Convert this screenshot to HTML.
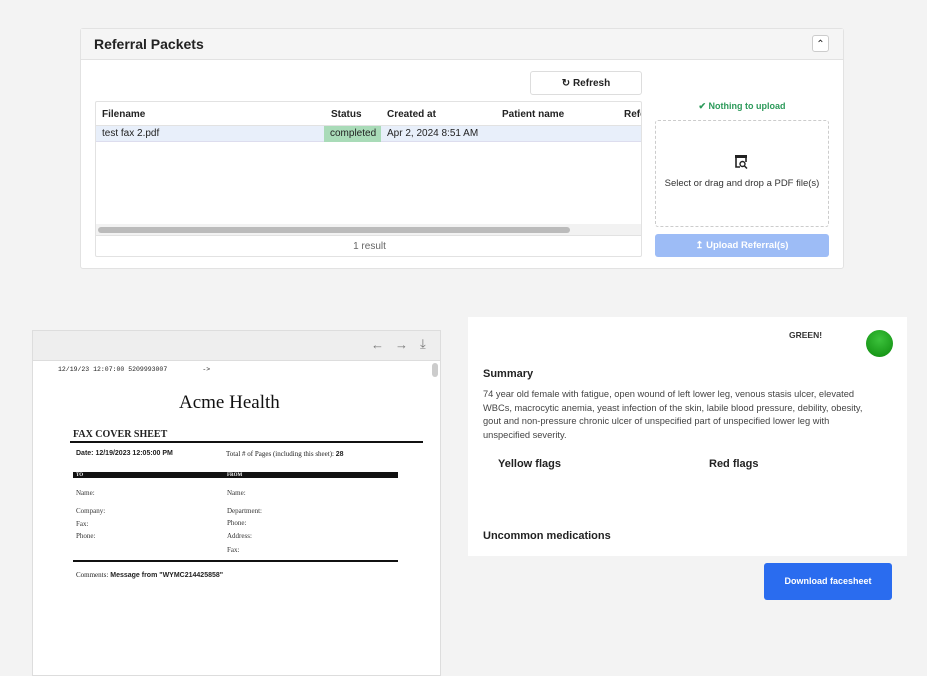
<!DOCTYPE html>
<html><head><style>
*{box-sizing:border-box;margin:0;padding:0}
body{width:927px;height:676px;background:#f3f3f3;font-family:"Liberation Sans",sans-serif;position:relative;overflow:hidden;color:#222}
.a{position:absolute}
.s{font-family:"Liberation Serif",serif}
.f{position:absolute;font-family:"Liberation Serif",serif;font-size:7px;color:#333}
</style></head><body>
<!-- top panel -->
<div class="a" style="left:80px;top:28px;width:764px;height:241px;background:#fff;border:1px solid #e2e2e2;border-radius:3px"></div>
<div class="a" style="left:81px;top:29px;width:762px;height:31px;background:#f5f5f5;border-bottom:1px solid #e2e2e2"></div>
<div class="a" style="left:94px;top:36px;font-size:14px;font-weight:bold;color:#222">Referral Packets</div>
<div class="a" style="left:812px;top:35px;width:17px;height:17px;border:1px solid #ccc;border-radius:3px;background:#fff;font-size:10px;text-align:center;line-height:17px">&#8963;</div>
<div class="a" style="left:530px;top:71px;width:112px;height:24px;border:1px solid #ddd;border-radius:3px;background:#fff;font-size:10px;font-weight:bold;text-align:center;line-height:23px">&#8635; Refresh</div>
<div class="a" style="left:95px;top:101px;width:547px;height:156px;border:1px solid #e2e2e2;border-radius:2px;overflow:hidden;background:#fff">
 <div class="a" style="left:0;top:0;width:547px;height:24px;border-bottom:1px solid #e2e2e2;font-size:10px;font-weight:bold">
  <span class="a" style="left:6px;top:7px">Filename</span><span class="a" style="left:235px;top:7px">Status</span><span class="a" style="left:291px;top:7px">Created at</span><span class="a" style="left:406px;top:7px">Patient name</span><span class="a" style="left:528px;top:7px">Refe</span></div>
 <div class="a" style="left:0;top:24px;width:547px;height:16px;background:#e8effa;border-bottom:1px solid #dde;font-size:10px">
  <span class="a" style="left:6px;top:2px">test fax 2.pdf</span>
  <span class="a" style="left:228px;top:0;width:57px;height:16px;background:#a9dbb8;padding:2px 0 0 6px">completed</span>
  <span class="a" style="left:291px;top:2px">Apr 2, 2024 8:51 AM</span></div>
 <div class="a" style="left:0;top:122px;width:547px;height:11px;background:#f2f2f2"></div>
 <div class="a" style="left:2px;top:125px;width:472px;height:6px;background:#bbb;border-radius:3px"></div>
 <div class="a" style="left:0;top:133px;width:547px;border-top:1px solid #e2e2e2;height:23px;font-size:10px;color:#666;text-align:center;line-height:22px">1 result</div>
</div>
<div class="a" style="left:655px;top:101px;width:174px;text-align:center;font-size:9px;font-weight:bold;color:#2c9a5a">&#10004;&#xFE0E; Nothing to upload</div>
<div class="a" style="left:655px;top:120px;width:174px;height:107px;border:1px dashed #ccc;border-radius:3px"></div>
<svg class="a" style="left:734px;top:154px" width="15" height="16" viewBox="0 0 15 16"><path d="M2 2v11h4" fill="none" stroke="#222" stroke-width="1.6"/><rect x="1" y="1" width="12" height="3" fill="#222"/><path d="M12 4v4" stroke="#222" stroke-width="1.6"/><circle cx="8.5" cy="10" r="2.5" fill="none" stroke="#222" stroke-width="1.4"/><path d="M10.5 12l2.5 2.5" stroke="#222" stroke-width="1.5"/></svg>
<div class="a" style="left:655px;top:178px;width:174px;text-align:center;font-size:9.5px;color:#333">Select or drag and drop a PDF file(s)</div>
<div class="a" style="left:655px;top:234px;width:174px;height:23px;background:#9dbcf6;border-radius:3px;color:#fff;font-size:9.5px;font-weight:bold;text-align:center;line-height:23px">&#8613; Upload Referral(s)</div>

<!-- pdf viewer -->
<div class="a" style="left:32px;top:330px;width:409px;height:346px;background:#fff;border:1px solid #ddd"></div>
<div class="a" style="left:33px;top:331px;width:407px;height:30px;background:#eeeeee;border-bottom:1px solid #ddd;font-size:13px;color:#777">
 <span class="a" style="left:338px;top:6px">&#8592;</span><span class="a" style="left:362px;top:6px">&#8594;</span><span class="a" style="left:387px;top:5px">&#10515;</span></div>
<div class="a" style="left:432px;top:363px;width:6px;height:14px;background:#ccc;border-radius:3px"></div>
<div class="a" style="left:58px;top:366px;font-size:6.5px;font-family:'Liberation Mono',monospace;color:#222">12/19/23 12:07:00 5209993007&nbsp;&nbsp;&nbsp;&nbsp;&nbsp;&nbsp;&nbsp;&nbsp;&nbsp;-&gt;</div>
<div class="a s" style="left:179px;top:392px;font-size:19px;color:#111">Acme Health</div>
<div class="a s" style="left:73px;top:429px;font-size:10px;font-weight:bold">FAX COVER SHEET</div>
<div class="a" style="left:70px;top:441px;width:353px;height:2px;background:#111"></div>
<div class="a" style="left:76px;top:450px;font-size:7px;font-weight:bold">Date: 12/19/2023 12:05:00 PM</div>
<div class="a s" style="left:226px;top:450px;font-size:7px">Total # of Pages (including this sheet): <b style="font-family:'Liberation Sans'">28</b></div>
<div class="a" style="left:73px;top:472px;width:325px;height:6px;background:#111"></div>
<div class="f" style="left:76px;top:473px;font-size:5px;line-height:5px;color:#fff;font-weight:bold">TO</div>
<div class="f" style="left:227px;top:473px;font-size:5px;line-height:5px;color:#fff;font-weight:bold">FROM</div>
<div class="f" style="left:76px;top:489px">Name:</div>
<div class="f" style="left:76px;top:507px">Company:</div>
<div class="f" style="left:76px;top:520px">Fax:</div>
<div class="f" style="left:76px;top:532px">Phone:</div>
<div class="f" style="left:227px;top:489px">Name:</div>
<div class="f" style="left:227px;top:507px">Department:</div>
<div class="f" style="left:227px;top:519px">Phone:</div>
<div class="f" style="left:227px;top:532px">Address:</div>
<div class="f" style="left:227px;top:546px">Fax:</div>
<div class="a" style="left:73px;top:560px;width:325px;height:2px;background:#111"></div>
<div class="a" style="left:76px;top:571px;font-size:7px"><span class="s">Comments:</span> <b>Message from "WYMC214425858"</b></div>

<!-- right card -->
<div class="a" style="left:468px;top:317px;width:439px;height:239px;background:#fff"></div>
<div class="a" style="left:789px;top:330px;font-size:8.5px;font-weight:bold;color:#333">GREEN!</div>
<div class="a" style="left:866px;top:330px;width:27px;height:27px;border-radius:50%;background:radial-gradient(circle at 50% 35%,#3cc23c,#0c8a0c)"></div>
<div class="a" style="left:483px;top:368px;font-size:11px;font-weight:bold;color:#222">Summary</div>
<div class="a" style="left:483px;top:388px;white-space:nowrap;font-size:9.3px;line-height:13.5px;color:#444">74 year old female with fatigue, open wound of left lower leg, venous stasis ulcer, elevated<br>WBCs, macrocytic anemia, yeast infection of the skin, labile blood pressure, debility, obesity,<br>gout and non-pressure chronic ulcer of unspecified part of unspecified lower leg with<br>unspecified severity.</div>
<div class="a" style="left:498px;top:458px;font-size:11px;font-weight:bold">Yellow flags</div>
<div class="a" style="left:709px;top:458px;font-size:11px;font-weight:bold">Red flags</div>
<div class="a" style="left:483px;top:530px;font-size:11px;font-weight:bold">Uncommon medications</div>
<div class="a" style="left:764px;top:563px;width:128px;height:37px;background:#2a6cef;border-radius:3px;color:#fff;font-size:9px;font-weight:bold;text-align:center;line-height:37px">Download facesheet</div>
</body></html>
